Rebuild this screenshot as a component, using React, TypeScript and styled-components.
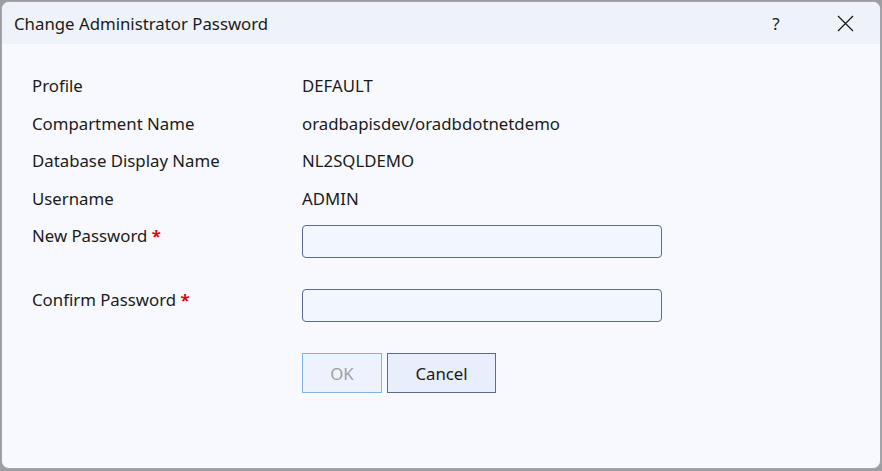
import React from 'react';
import styled, { createGlobalStyle } from 'styled-components';

const GlobalStyle = createGlobalStyle`
  html, body {
    margin: 0;
    padding: 0;
    width: 882px;
    height: 471px;
    overflow: hidden;
    background: #9c9ea3;
  }
  body {
    font-family: "Noto Sans", "Open Sans", sans-serif;
  }
`;

const Screen = styled.div`
  width: 882px;
  height: 471px;
  box-sizing: border-box;
  padding: 1px 1px 2px 1px;
  display: flex;
`;

const Window = styled.div`
  flex: 1;
  display: flex;
  flex-direction: column;
  background: #f7f9fe;
  border: 1px solid #a3a5aa;
  border-radius: 8px;
  overflow: hidden;
`;

const TitleBar = styled.div`
  height: 42px;
  flex: none;
  display: flex;
  align-items: center;
  background: #eef2f9;
  padding-left: 12px;
`;

const Title = styled.div`
  flex: 1;
  font-size: 16.8px;
  color: #1b1b1b;
`;

const TitleButton = styled.div<{ $w: number }>`
  width: ${(p) => p.$w}px;
  height: 42px;
  display: flex;
  align-items: center;
  justify-content: center;
  color: #1b1b1b;
  font-size: 17px;
`;

const Body = styled.div`
  padding: 23px 0 0 30px;
`;

const Grid = styled.div`
  display: grid;
  grid-template-columns: 270px 360px;
`;

const Label = styled.div<{ $field?: boolean }>`
  font-size: 16.8px;
  color: #1b1b1b;
  height: ${(p) => (p.$field ? 'auto' : '37.5px')};
  line-height: ${(p) => (p.$field ? '22px' : '37.5px')};
  margin-top: ${(p) => (p.$field ? '8px' : '0')};
`;

const Value = styled.div`
  font-size: 16.8px;
  color: #1b1b1b;
  height: 37.5px;
  line-height: 37.5px;
`;

const Required = styled.span`
  color: #e3000f;
  font-weight: 700;
`;

const Input = styled.input<{ $gap: number }>`
  box-sizing: border-box;
  width: 360px;
  height: 33px;
  margin: 8px 0 ${(p) => p.$gap}px 0;
  border: 1px solid #5c6a95;
  border-radius: 4px;
  background: #f2f6fe;
  outline: none;
`;

const Buttons = styled.div`
  grid-column: 2;
  display: flex;
  gap: 5px;
`;

const Button = styled.button<{ $w: number; $disabled?: boolean }>`
  box-sizing: border-box;
  width: ${(p) => p.$w}px;
  height: 40px;
  font-family: inherit;
  font-size: 16.8px;
  color: ${(p) => (p.$disabled ? '#a0a0a0' : '#1b1b1b')};
  background: ${(p) => (p.$disabled ? '#eef2fe' : '#e9eefc')};
  border: 1px solid ${(p) => (p.$disabled ? '#7fb4e6' : '#5f6a8e')};
  border-radius: 0;
  padding: 0;
`;

const rows: [string, string][] = [
  ['Profile', 'DEFAULT'],
  ['Compartment Name', 'oradbapisdev/oradbdotnetdemo'],
  ['Database Display Name', 'NL2SQLDEMO'],
  ['Username', 'ADMIN'],
];

export default function App() {
  return (
    <>
      <GlobalStyle />
      <Screen>
        <Window>
          <TitleBar>
            <Title>Change Administrator Password</Title>
            <TitleButton $w={68}>?</TitleButton>
            <TitleButton $w={70}>
              <svg width="17" height="17" viewBox="0 0 17 17">
                <path d="M1 1L16 16M16 1L1 16" stroke="#1b1b1b" strokeWidth="1.3" fill="none" />
              </svg>
            </TitleButton>
          </TitleBar>
          <Body>
            <Grid>
              {rows.map(([k, v]) => (
                <React.Fragment key={k}>
                  <Label>{k}</Label>
                  <Value>{v}</Value>
                </React.Fragment>
              ))}
              <Label $field>
                New Password <Required>*</Required>
              </Label>
              <Input type="password" $gap={23} />
              <Label $field>
                Confirm Password <Required>*</Required>
              </Label>
              <Input type="password" $gap={31} />
              <Buttons>
                <Button $w={80} $disabled disabled>
                  OK
                </Button>
                <Button $w={109}>Cancel</Button>
              </Buttons>
            </Grid>
          </Body>
        </Window>
      </Screen>
    </>
  );
}
